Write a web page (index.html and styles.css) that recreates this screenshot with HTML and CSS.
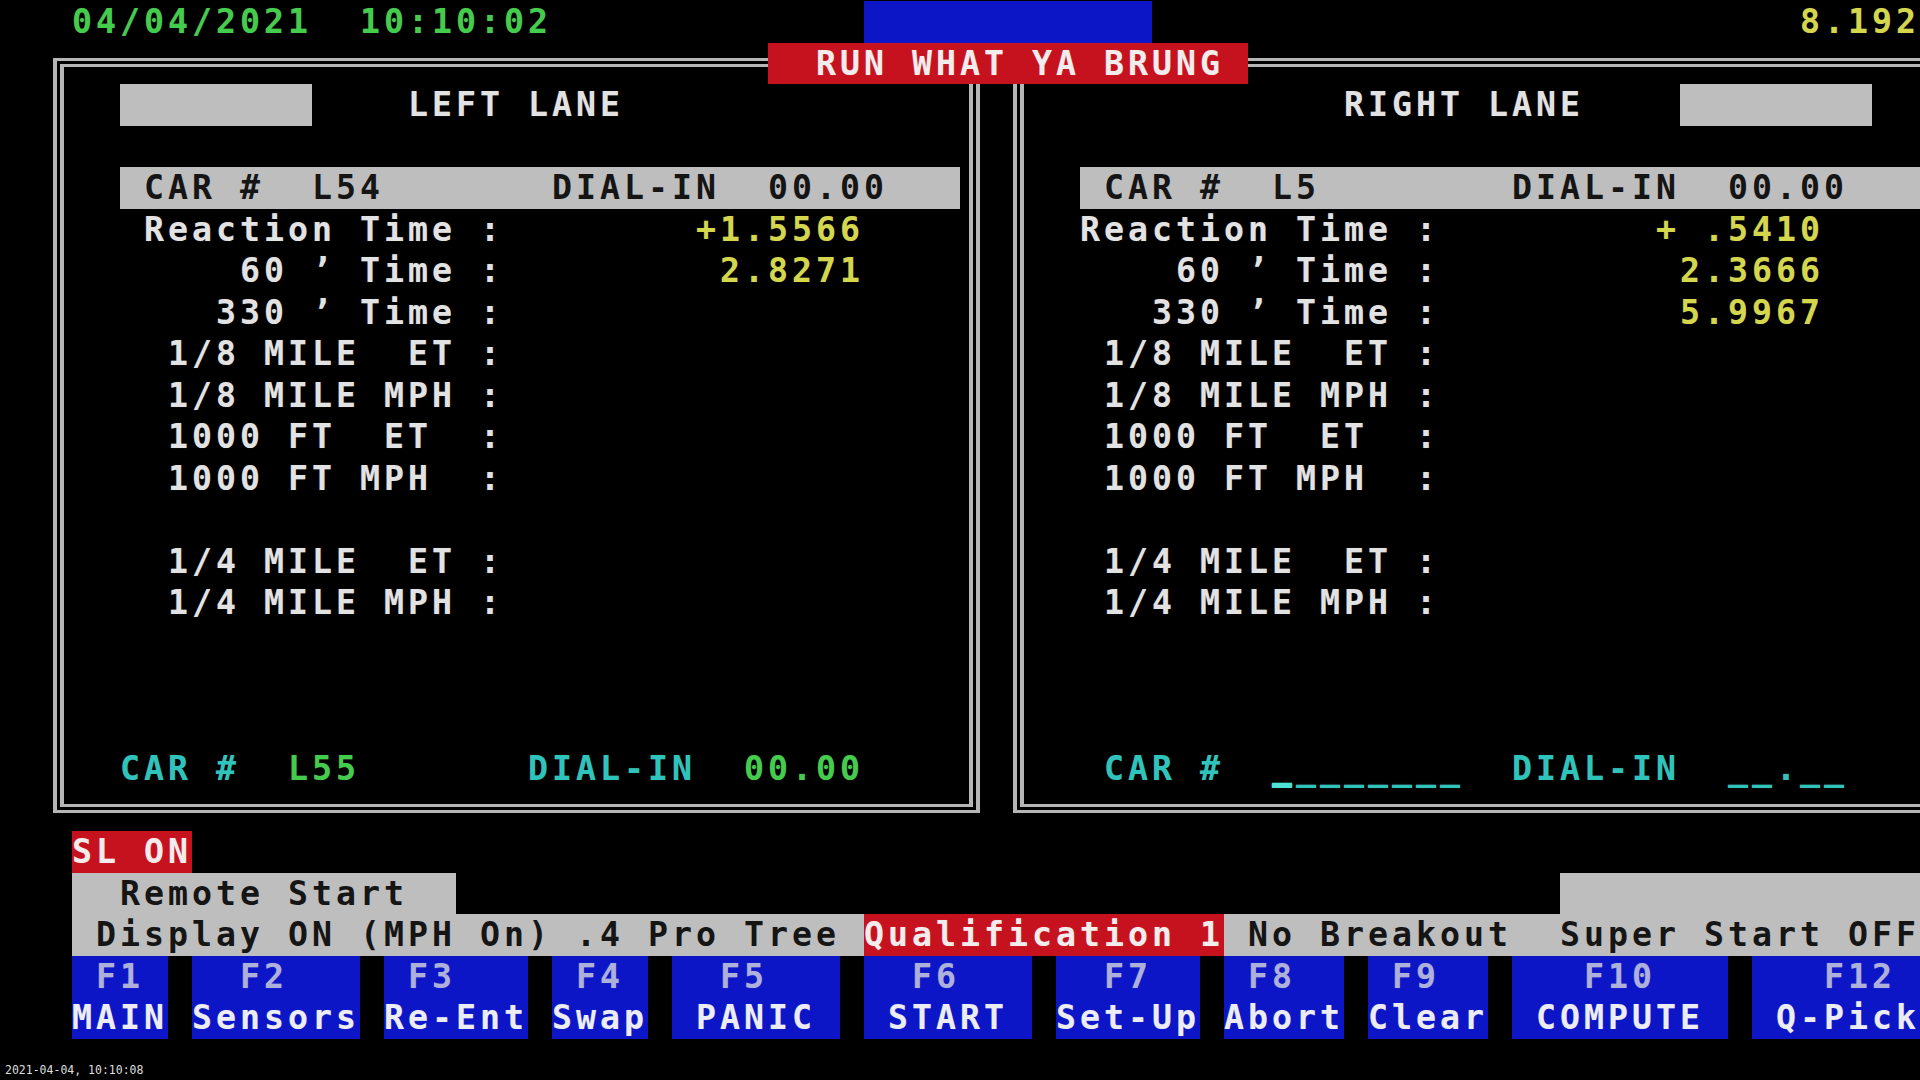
FILE: index.html
```html
<!DOCTYPE html>
<html lang="en">
<head>
<meta charset="utf-8">
<title>Run What Ya Brung</title>
<link rel="stylesheet" href="styles.css">
</head>
<body>
<div class="screen">
  <div class="row">   <span class="g">04/04/2021  10:10:02</span>             <span class="blk blue">            </span>                           <span class="y">8.192</span></div>

  <div class="lanes">
    <section class="panel">
      <div class="row">  <span class="blk gray">        </span>    LEFT LANE</div>
      <div class="row"></div>
      <div class="row">  <span class="blk gray"> CAR #  L54       DIAL-IN  00.00   </span></div>
      <div class="row">   Reaction Time :        <span class="y">+1.5566</span></div>
      <div class="row">       60 ’ Time :         <span class="y">2.8271</span></div>
      <div class="row">      330 ’ Time :</div>
      <div class="row">    1/8 MILE  ET :</div>
      <div class="row">    1/8 MILE MPH :</div>
      <div class="row">    1000 FT  ET  :</div>
      <div class="row">    1000 FT MPH  :</div>
      <div class="row"></div>
      <div class="row">    1/4 MILE  ET :</div>
      <div class="row">    1/4 MILE MPH :</div>
      <div class="row"></div>
      <div class="row"></div>
      <div class="row"></div>
      <div class="row">  <span class="c">CAR #</span>  <span class="g">L55</span>       <span class="c">DIAL-IN</span>  <span class="g">00.00</span></div>
    </section>
    <section class="panel">
      <div class="row">             RIGHT LANE    <span class="blk gray">        </span></div>
      <div class="row"></div>
      <div class="row">  <span class="blk gray"> CAR #  L5        DIAL-IN  00.00   </span></div>
      <div class="row">  Reaction Time :         <span class="y">+ .5410</span></div>
      <div class="row">      60 ’ Time :          <span class="y">2.3666</span></div>
      <div class="row">     330 ’ Time :          <span class="y">5.9967</span></div>
      <div class="row">   1/8 MILE  ET :</div>
      <div class="row">   1/8 MILE MPH :</div>
      <div class="row">   1000 FT  ET  :</div>
      <div class="row">   1000 FT MPH  :</div>
      <div class="row"></div>
      <div class="row">   1/4 MILE  ET :</div>
      <div class="row">   1/4 MILE MPH :</div>
      <div class="row"></div>
      <div class="row"></div>
      <div class="row"></div>
      <div class="row">   <span class="c">CAR #</span>  <span class="c"><span class="cursor">_</span>_______</span>  <span class="c">DIAL-IN</span>  <span class="c">__.__</span></div>
    </section>
    <div class="banner">  RUN WHAT YA BRUNG </div>
  </div>

  <div class="row">   <span class="blk red">SL ON</span></div>
  <div class="row split">   <span class="blk gray">  Remote Start  </span><span class="blk gray fill">               </span></div>
  <div class="row">   <span class="blk gray"> Display ON (MPH On) .4 Pro Tree </span><span class="blk red">Qualification 1</span><span class="blk gray"> No Breakout  Super Start OFF</span></div>

  <div class="fkeys">
    <div class="key"><div class="kl kn"> F1 </div><div class="kl">MAIN</div></div>
    <div class="key"><div class="kl kn">  F2   </div><div class="kl">Sensors</div></div>
    <div class="key"><div class="kl kn"> F3   </div><div class="kl">Re-Ent</div></div>
    <div class="key"><div class="kl kn"> F4 </div><div class="kl">Swap</div></div>
    <div class="key"><div class="kl kn">  F5   </div><div class="kl"> PANIC </div></div>
    <div class="key"><div class="kl kn">  F6   </div><div class="kl"> START </div></div>
    <div class="key"><div class="kl kn">  F7  </div><div class="kl">Set-Up</div></div>
    <div class="key"><div class="kl kn"> F8  </div><div class="kl">Abort</div></div>
    <div class="key"><div class="kl kn"> F9  </div><div class="kl">Clear</div></div>
    <div class="key"><div class="kl kn">   F10   </div><div class="kl"> COMPUTE </div></div>
    <div class="key"><div class="kl kn">   F12 </div><div class="kl"> Q-Pick</div></div>
  </div>

  <div class="stamp">2021-04-04, 10:10:08</div>
</div>
</body>
</html>
```

FILE: styles.css
```css
html, body {
  margin: 0;
  padding: 0;
  background: #000;
}

body {
  width: 1920px;
  height: 1080px;
  overflow: hidden;
}

.screen {
  position: relative;
  width: 1920px;
  height: 1080px;
  box-sizing: border-box;
  padding-top: 1px;
  overflow: hidden;
  background: #000;
  font-family: "DejaVu Sans Mono", "Liberation Mono", monospace;
  font-weight: bold;
  font-size: 33.22px;
  letter-spacing: 4px;
  color: #e2e2e2;
  text-shadow: 0 0 1px rgba(255, 255, 255, 0.25);
}

.row {
  height: 41.5px;
  line-height: 41.5px;
  white-space: pre;
}

.row.split {
  display: flex;
}

.row.split::before {
  content: "   ";
  white-space: pre;
}

.fill {
  margin-left: auto;
}

.blk {
  display: inline-block;
  height: 41.5px;
  line-height: 41.5px;
  vertical-align: top;
}

.g { color: #44cc4c; }
.c { color: #2ec4bc; }
.y { color: #d4d64c; }

.gray {
  background: #bebebe;
  color: #151515;
  text-shadow: none;
}

.red {
  background: #c6121e;
  color: #f2ecec;
}

.blue {
  background: #0c16c6;
}

.cursor {
  text-shadow: 0 -2px 0 currentColor, 0 -1px 0 currentColor;
  color: #4fe0d6;
}

/* lanes */
.lanes {
  position: relative;
  height: 788.5px;
  display: flex;
  gap: 33px;
  padding-left: 53px;
}

.panel {
  flex: none;
  width: 927px;
  height: 755px;
  margin-top: 15.5px;
  box-sizing: border-box;
  border-style: double;
  border-color: #b6b6b6;
  border-width: 9px 11px;
  padding: 17px 0 0 8px;
}

.banner {
  position: absolute;
  left: 768px;
  top: 0;
  height: 41.5px;
  line-height: 41.5px;
  white-space: pre;
  background: #c6121e;
  color: #f2ecec;
}

/* function keys */
.fkeys {
  display: flex;
  gap: 24px;
  padding-left: 72px;
}

.key {
  background: #0c16c6;
  display: flex;
  flex-direction: column;
}

.kl {
  height: 41.5px;
  line-height: 41.5px;
  white-space: pre;
  color: #ececf4;
}

.kl.kn {
  color: #aeb0dc;
}

/* capture timestamp */
.stamp {
  margin-top: 24px;
  padding-left: 5px;
  font-family: "DejaVu Sans Mono", monospace;
  font-weight: normal;
  font-size: 11.5px;
  letter-spacing: 0;
  line-height: 14px;
  color: #dedede;
  text-shadow: none;
}
```
